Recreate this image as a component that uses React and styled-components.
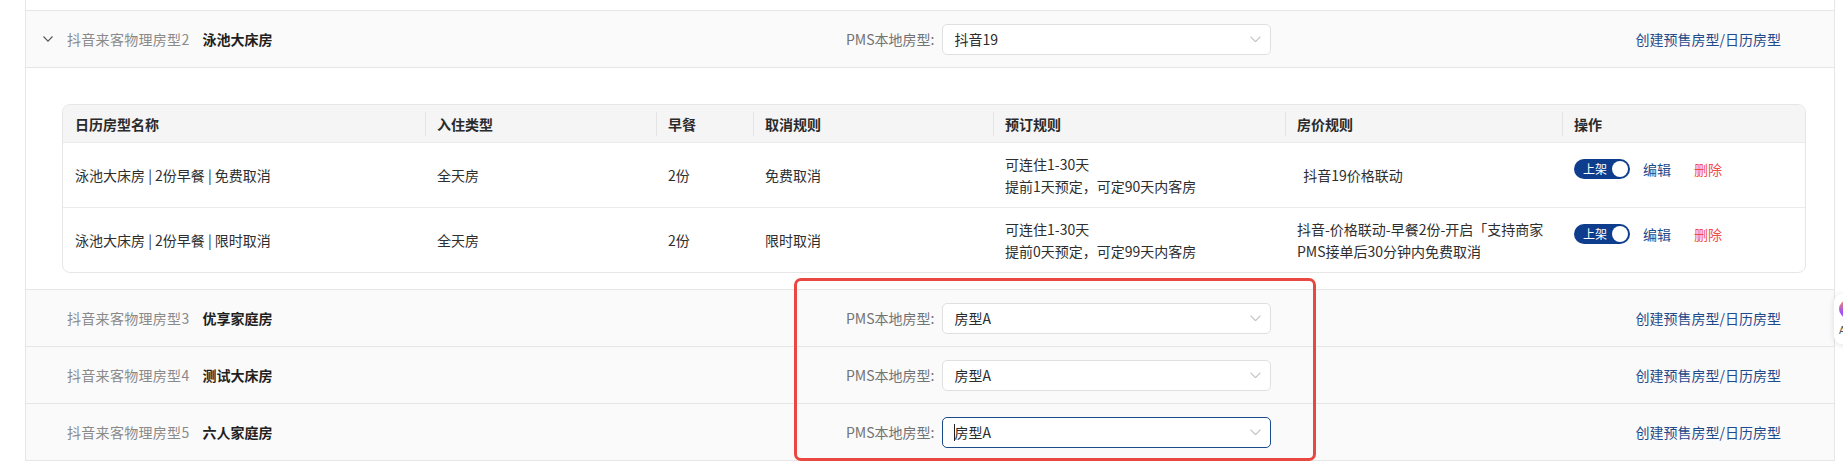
import React from 'react'
import styled, { createGlobalStyle } from 'styled-components'

const GlobalStyle = createGlobalStyle`
  html, body {
    margin: 0;
    padding: 0;
    background: #fff;
    overflow: hidden;
  }
  body {
    font-family: "Noto Sans CJK SC", "Noto Sans", sans-serif;
    font-size: 14px;
    color: #333;
  }
`

const Page = styled.div`
  position: relative;
  width: 1843px;
  height: 465px;
  overflow: hidden;
`

const List = styled.div`
  margin-left: 25px;
  width: 1808px;
  border-left: 1px solid #e6e6e6;
  border-right: 1px solid #e6e6e6;
`

const TopGap = styled.div`
  height: 10px;
`

const RoomRow = styled.div`
  display: grid;
  grid-template-columns: 820px auto 1fr;
  align-items: center;
  height: 56px;
  background: #fafafa;
  border-bottom: 1px solid #e6e6e6;
  border-top: ${p => (p.$first ? '1px solid #e6e6e6' : 'none')};
`

const NameCell = styled.div`
  display: flex;
  align-items: center;
`

const ExpandSlot = styled.div`
  width: 41px;
  padding-left: 17px;
  box-sizing: border-box;
  display: flex;
  align-items: center;
  color: #555;
`

const RoomNo = styled.span`
  color: #8a8a8a;
  line-height: 22px;
  letter-spacing: 0.3px;
`

const RoomName = styled.span`
  margin-left: 13px;
  color: #1f1f1f;
  font-weight: 600;
  line-height: 22px;
`

const MapCell = styled.div`
  display: flex;
  align-items: center;
`

const MapLabel = styled.span`
  color: #737373;
  font-size: 14px;
  margin-right: 8px;
`

const Select = styled.div`
  display: flex;
  align-items: center;
  width: 329px;
  height: 31px;
  box-sizing: border-box;
  padding: 0 9px 0 11px;
  background: #fff;
  border: 1px solid ${p => (p.$focused ? '#1b4a8a' : '#e0e0e0')};
  border-radius: 5px;
  color: #2b2b2b;
`

const SelectValue = styled.span`
  flex: 1;
  display: flex;
  align-items: center;
`

const Caret = styled.i`
  display: inline-block;
  width: 1px;
  height: 17px;
  background: #222;
  margin-right: -1px;
`

const LinkCell = styled.div`
  display: flex;
  justify-content: flex-end;
  padding-right: 53px;
`

const TextLink = styled.a`
  color: #1e4b8c;
  text-decoration: none;
  cursor: pointer;
`

const Expanded = styled.div`
  background: #fff;
  padding: 36px 28px 16px 36px;
  border-bottom: 1px solid #e6e6e6;
`

const Card = styled.div`
  border: 1px solid #e6e6e6;
  border-radius: 8px;
  overflow: hidden;
`

const columns = '362px 231px 97px 240px 292px 277px 1fr'

const HeadRow = styled.div`
  display: grid;
  grid-template-columns: ${columns};
  height: 37px;
  align-items: center;
  background: #f5f5f5;
`

const HeadCell = styled.div`
  position: relative;
  padding: 0 12px;
  font-weight: 600;
  color: #2a2a2a;
  &::before {
    content: '';
    display: ${p => (p.$first ? 'none' : 'block')};
    position: absolute;
    left: 0;
    top: 50%;
    width: 1px;
    height: 24px;
    margin-top: -12px;
    background: #e3e3e3;
  }
`

const BodyRow = styled.div`
  display: grid;
  grid-template-columns: ${columns};
  align-items: center;
  min-height: 64px;
  border-top: 1px solid #ececec;
`

const Cell = styled.div`
  padding: 10px 12px;
  line-height: 22px;
  color: #2e2e2e;
`

const ActionCell = styled.div`
  display: flex;
  align-items: center;
  padding: 0 12px 12px;
`

const Toggle = styled.span`
  display: inline-flex;
  align-items: center;
  justify-content: space-between;
  width: 56px;
  height: 20px;
  box-sizing: border-box;
  padding: 0 2px 0 9px;
  border-radius: 10px;
  background: #0d3d8c;
  color: #fff;
  font-size: 12px;
  line-height: 20px;
`

const Knob = styled.span`
  width: 16px;
  height: 16px;
  border-radius: 50%;
  background: #fff;
`

const ActLink = styled.a`
  margin-left: ${p => p.$gap}px;
  color: ${p => (p.$danger ? '#ef4b4b' : '#1e4b8c')};
  cursor: pointer;
`

const Highlight = styled.div`
  position: absolute;
  left: 794px;
  top: 278px;
  width: 522px;
  height: 183px;
  box-sizing: border-box;
  border: 3px solid #e8483f;
  border-radius: 7px;
  pointer-events: none;
`

const FloatWidget = styled.div`
  position: absolute;
  left: 1834px;
  top: 294px;
  width: 44px;
  height: 50px;
  background: #fff;
  border-radius: 8px;
  box-shadow: 0 1px 6px rgba(0, 0, 0, 0.12);
  display: flex;
  flex-direction: column;
  align-items: flex-start;
  padding: 6px 0 0 5px;
  box-sizing: border-box;
`

const Orb = styled.span`
  width: 18px;
  height: 18px;
  border-radius: 50%;
  background: conic-gradient(#ff9a3c, #ff4fa3, #a04dff, #ff9a3c);
`

const OrbLabel = styled.span`
  margin-top: 7px;
  font-size: 10px;
  color: #555;
  font-family: "Liberation Sans", sans-serif;
`

const Chevron = ({ size = 10, color = '#555' }) => (
  <svg width={size} height={size * 0.6} viewBox="0 0 10 6" fill="none">
    <polyline points="0.5,0.5 5,5.2 9.5,0.5" stroke={color} strokeWidth="1.1" />
  </svg>
)

const rooms = [
  { no: 3, name: '优享家庭房', pms: '房型A' },
  { no: 4, name: '测试大床房', pms: '房型A' },
  { no: 5, name: '六人家庭房', pms: '房型A', focused: true },
]

const ratePlans = [
  {
    name: '泳池大床房 | 2份早餐 | 免费取消',
    stay: '全天房',
    breakfast: '2份',
    cancel: '免费取消',
    booking: ['可连住1-30天', '提前1天预定，可定90天内客房'],
    price: ['\u00a0\u00a0抖音19价格联动'],
  },
  {
    name: '泳池大床房 | 2份早餐 | 限时取消',
    stay: '全天房',
    breakfast: '2份',
    cancel: '限时取消',
    booking: ['可连住1-30天', '提前0天预定，可定99天内客房'],
    price: ['抖音-价格联动-早餐2份-开启「支持商家', 'PMS接单后30分钟内免费取消'],
  },
]

const heads = ['日历房型名称', '入住类型', '早餐', '取消规则', '预订规则', '房价规则', '操作']

function RoomHeader({ no, name, pms, expanded, first, focused }) {
  return (
    <RoomRow $first={first}>
      <NameCell>
        <ExpandSlot>{expanded && <Chevron />}</ExpandSlot>
        <RoomNo>抖音来客物理房型{no}</RoomNo>
        <RoomName>{name}</RoomName>
      </NameCell>
      <MapCell>
        <MapLabel>PMS本地房型:</MapLabel>
        <Select $focused={focused}>
          <SelectValue>
            {focused && <Caret />}
            {pms}
          </SelectValue>
          <Chevron size={11} color="#c4c4c4" />
        </Select>
      </MapCell>
      <LinkCell>
        <TextLink>创建预售房型/日历房型</TextLink>
      </LinkCell>
    </RoomRow>
  )
}

export default function App() {
  return (
    <Page>
      <GlobalStyle />
      <List>
        <TopGap />
        <RoomHeader no={2} name="泳池大床房" pms="抖音19" expanded first />
        <Expanded>
          <Card>
            <HeadRow>
              {heads.map((h, i) => (
                <HeadCell key={h} $first={i === 0}>{h}</HeadCell>
              ))}
            </HeadRow>
            {ratePlans.map(p => (
              <BodyRow key={p.name}>
                <Cell>{p.name}</Cell>
                <Cell>{p.stay}</Cell>
                <Cell>{p.breakfast}</Cell>
                <Cell>{p.cancel}</Cell>
                <Cell>
                  {p.booking.map(l => <div key={l}>{l}</div>)}
                </Cell>
                <Cell>
                  {p.price.map(l => <div key={l}>{l}</div>)}
                </Cell>
                <ActionCell>
                  <Toggle>上架<Knob /></Toggle>
                  <ActLink $gap={13}>编辑</ActLink>
                  <ActLink $gap={23} $danger>删除</ActLink>
                </ActionCell>
              </BodyRow>
            ))}
          </Card>
        </Expanded>
        {rooms.map(r => (
          <RoomHeader key={r.no} {...r} />
        ))}
      </List>
      <Highlight />
      <FloatWidget>
        <Orb />
        <OrbLabel>A</OrbLabel>
      </FloatWidget>
    </Page>
  )
}
